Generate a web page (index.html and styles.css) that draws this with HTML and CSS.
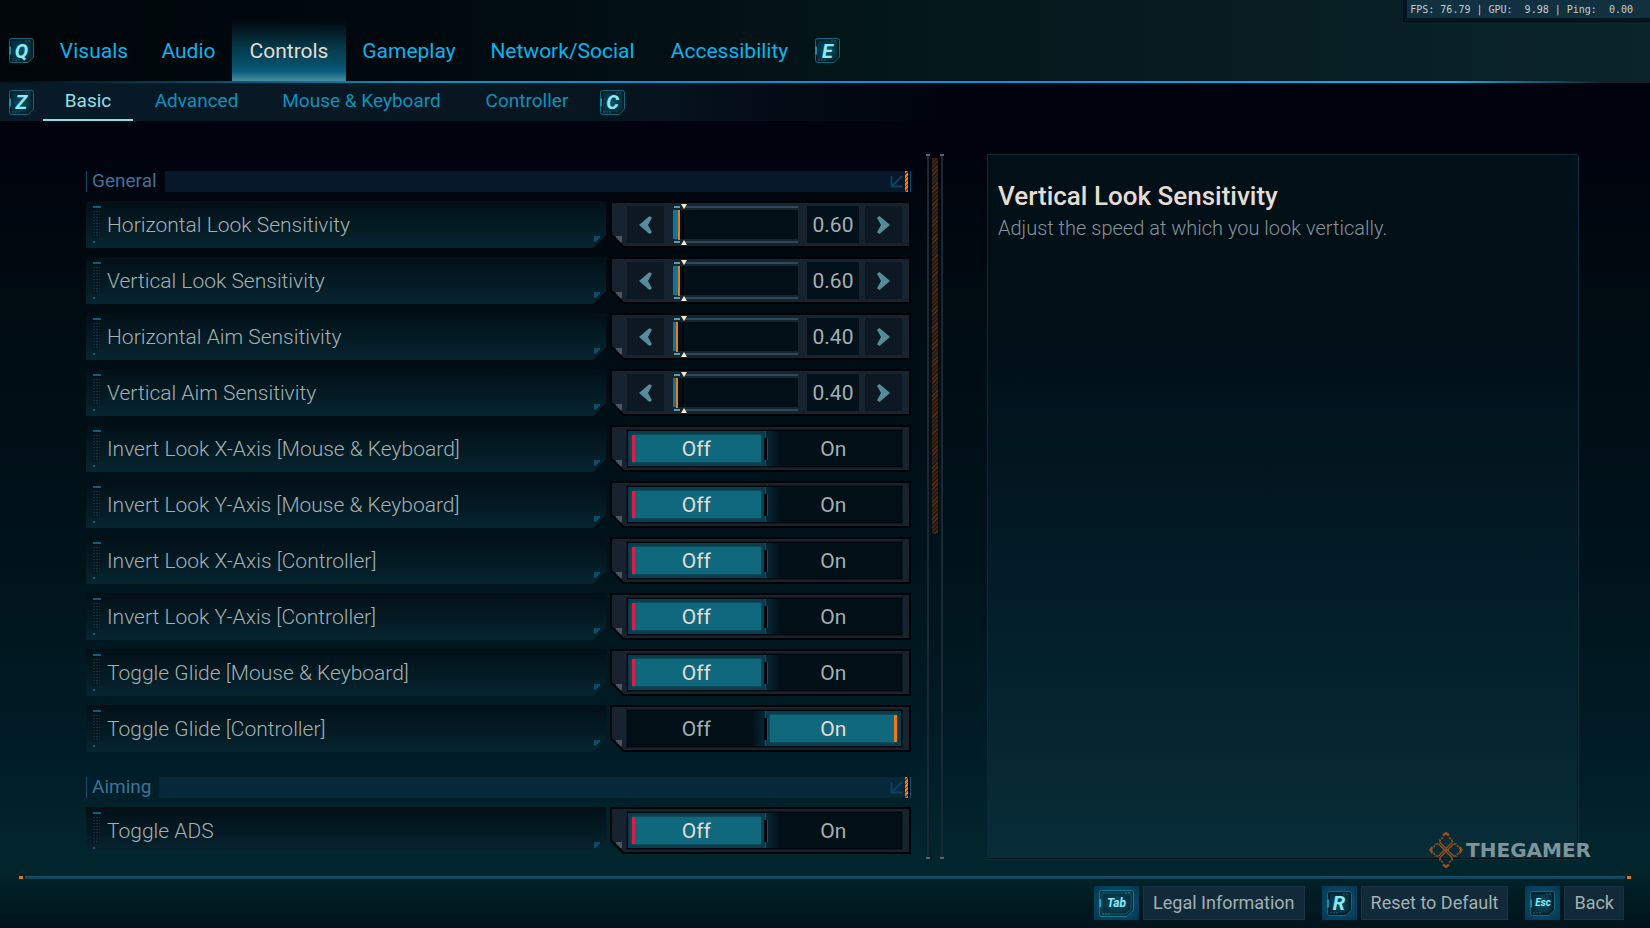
FILE: index.html
```html
<!DOCTYPE html>
<html lang="en">
<head>
<meta charset="utf-8">
<title>Controls</title>
<link rel="stylesheet" href="styles.css">
</head>
<body>
<svg class="defs" aria-hidden="true">
  <defs>
    <radialGradient id="glow"><stop offset="0" stop-color="#0f5468"/><stop offset="1" stop-color="#06303f"/></radialGradient>
    <symbol id="key" viewBox="0 0 25 25">
      <path d="M2.5.5h20a2 2 0 0 1 2 2v16.500l-5.500 5.500H2.500a2 2 0 0 1-2-2v-20a2 2 0 0 1 2-2z" fill="#04202b" stroke="#12677b"/>
      <path d="M3 3h19v15l-4 4H3z" fill="url(#glow)"/>
      <path d="M1 8.500v8" stroke="#1590a8" stroke-width="2"/>
      <path d="M16 3h5M3 22h8" stroke="#12677b" stroke-dasharray="2 1"/>
    </symbol>
    <symbol id="key-wide" viewBox="0 0 35 27">
      <path d="M2.500.5h30a2 2 0 0 1 2 2v17.500l-6.500 6.500H2.500a2 2 0 0 1-2-2v-22a2 2 0 0 1 2-2z" fill="#04303f" stroke="#14788a"/>
      <path d="M3 3h29v16l-5 5H3z" fill="url(#glow)" stroke="#0e5a6c"/>
      <path d="M1 9v8" stroke="#1aa5b8" stroke-width="2"/>
      <path d="M26 3h5M3 24h8" stroke="#14788a" stroke-dasharray="2 1"/>
    </symbol>
    <symbol id="prev" viewBox="0 0 13 18"><path d="M10.500 0 13 1.800 9 9l4 7.200L10.500 18 0 9z" fill="#568b99"/></symbol>
    <symbol id="next" viewBox="0 0 13 18"><path d="M2.500 0 0 1.800 4 9 0 16.200 2.500 18 13 9z" fill="#568b99"/></symbol>
    <symbol id="collapse" viewBox="0 0 13 13"><path d="M1.500 1v10.500H12M2 11 12 1" fill="none" stroke="#0d4361" stroke-width="1.800"/></symbol>
  </defs>
</svg>

<div class="stats">FPS: 76.79 | GPU:  9.98 | Ping:  0.00</div>

<header class="top">
  <button class="key"><svg><use href="#key"/></svg><span>Q</span></button>
  <nav class="tabs">
    <a href="#visuals">Visuals</a>
    <a href="#audio">Audio</a>
    <a href="#controls" class="active" aria-current="page">Controls</a>
    <a href="#gameplay">Gameplay</a>
    <a href="#network">Network/Social</a>
    <a href="#accessibility">Accessibility</a>
  </nav>
  <button class="key"><svg><use href="#key"/></svg><span>E</span></button>
</header>

<div class="sub">
  <button class="key"><svg><use href="#key"/></svg><span>Z</span></button>
  <nav class="subtabs">
    <a href="#basic" class="active" aria-current="page">Basic</a>
    <a href="#advanced">Advanced</a>
    <a href="#mouse">Mouse &amp; Keyboard</a>
    <a href="#controller">Controller</a>
  </nav>
  <button class="key"><svg><use href="#key"/></svg><span>C</span></button>
</div>

<main class="main">
  <div class="list">
    <section>
      <h2 class="group"><span class="group-name">General</span><span class="group-bar"><svg class="collapse"><use href="#collapse"/></svg></span></h2>
      <div class="rows" id="general"></div>
    </section>
    <section>
      <h2 class="group"><span class="group-name">Aiming</span><span class="group-bar"><svg class="collapse"><use href="#collapse"/></svg></span></h2>
      <div class="rows" id="aiming"></div>
    </section>
  </div>
  <div class="scroll"><div class="thumb"></div></div>
  <aside class="info">
    <h1>Vertical Look Sensitivity</h1>
    <p>Adjust the speed at which you look vertically.</p>
    <div class="brand">
      <svg viewBox="0 0 34 36" fill="none" stroke="#9a4f1d" stroke-width="1.200">
        <path d="M11 10.500 24.500 24M9.500 12 23 25.500M23 10.500 9.500 24M24.500 12 11 25.500"/>
        <path d="M11 10.500V8l3-2.500M23 10.500V8l-3-2.500M11 25.500V28l3 2.500M23 25.500V28l-3 2.500M9.500 12H7l-2.500 3M9.500 24H7l-2.500-3M24.500 12H27l2.500 3M24.500 24H27l2.500-3" stroke-width="1.600" stroke-dasharray="3 1"/>
        <path d="M14 3.500 17 1l3 2.500M14 32.500l3 2.500 3-2.500M3.500 15l-2 3 2 3M30.500 15l2 3-2 3" stroke-width="2.400"/>
      </svg>
      <span>THEGAMER</span>
    </div>
  </aside>
</main>

<footer class="footer">
  <div class="rule"></div>
  <div class="actions">
    <div class="action"><span class="cap"><svg class="wide"><use href="#key-wide"/></svg><kbd class="small">Tab</kbd></span><button>Legal Information</button></div>
    <div class="action"><span class="cap"><svg><use href="#key"/></svg><kbd>R</kbd></span><button>Reset to Default</button></div>
    <div class="action"><span class="cap"><svg><use href="#key"/></svg><kbd class="tiny">Esc</kbd></span><button>Back</button></div>
  </div>
</footer>
<script src="settings.js"></script>
</body>
</html>
```
FILE: settings.js
```js
const general = [
  { name: 'Horizontal Look Sensitivity', value: '0.60' },
  { name: 'Vertical Look Sensitivity', value: '0.60' },
  { name: 'Horizontal Aim Sensitivity', value: '0.40' },
  { name: 'Vertical Aim Sensitivity', value: '0.40' },
  { name: 'Invert Look X-Axis [Mouse & Keyboard]', on: false },
  { name: 'Invert Look Y-Axis [Mouse & Keyboard]', on: false },
  { name: 'Invert Look X-Axis [Controller]', on: false },
  { name: 'Invert Look Y-Axis [Controller]', on: false },
  { name: 'Toggle Glide [Mouse & Keyboard]', on: false },
  { name: 'Toggle Glide [Controller]', on: true }
];
const aiming = [{ name: 'Toggle ADS', on: false }];
const MIN = 0.2, MAX = 10;

function slider(item, id) {
  const fill = (item.value - MIN) / (MAX - MIN) * 100;
  return `<button class="step" aria-label="Decrease"><svg><use href="#prev"/></svg></button>
    <div class="slider" style="--fill:${fill}%">
      <input type="range" id="${id}" min="${MIN}" max="${MAX}" step="0.05" value="${item.value}">
    </div>
    <output class="value" for="${id}">${item.value}</output>
    <button class="step" aria-label="Increase"><svg><use href="#next"/></svg></button>`;
}

function toggle(item, id) {
  return `<div class="toggle" role="radiogroup" aria-labelledby="${id}-label">
      <label class="opt off"><input type="radio" name="${id}" ${item.on ? '' : 'checked'}><span>Off</span></label>
      <label class="opt on"><input type="radio" name="${id}" ${item.on ? 'checked' : ''}><span>On</span></label>
    </div>`;
}

function render(target, items) {
  document.getElementById(target).innerHTML = items.map((item, i) => {
    const id = `${target}-${i}`;
    const name = item.name.replace('&', '&amp;');
    const ranged = item.value !== undefined;
    const label = ranged ? `<label for="${id}">${name}</label>` : `<span id="${id}-label">${name}</span>`;
    return `<div class="row"><div class="name">${label}</div>
      <div class="control">${ranged ? slider(item, id) : toggle(item, id)}</div></div>`;
  }).join('');
}

render('general', general);
render('aiming', aiming);
```
FILE: styles.css
```css
* { box-sizing: border-box; }

body {
  margin: 0;
  min-height: 100vh;
  display: flex;
  flex-direction: column;
  background: linear-gradient(#00030d 0, #00030d 17%, #000b12 32%, #00121a 58%, #001d27 82%, #02262d 93%, #00131b 100%);
  color: #a3b0b2;
  font: 300 21px/24px Roboto, "Liberation Sans", sans-serif;
}

a { color: inherit; text-decoration: none; }
button { margin: 0; padding: 0; border: 0; background: none; color: inherit; font: inherit; }
h1, h2, p { margin: 0; }
.defs { position: absolute; width: 0; height: 0; }

.stats {
  position: absolute;
  top: 0;
  right: 0;
  height: 21px;
  padding: 0 17px 0 3px;
  border: solid #061620;
  border-width: 0 0 3px 3px;
  outline: 1px solid #02090f;
  background: #123140;
  color: #c3cdd0;
  font: 10px/19px "DejaVu Sans Mono", monospace;
  white-space: pre;
}

.top {
  display: flex;
  align-items: center;
  height: 83px;
  padding: 20px 9px 0;
  border-bottom: 2px solid;
  border-image: linear-gradient(90deg, #00131c 2%, #0a91c4 25%, #0a91e8 60%, #08b4e8 88%, #0a242a 97%) 1;
  background: linear-gradient(90deg, #00060a, #00090e 25%, #04171b 55%, #0a242a);
}
.tabs {
  display: grid;
  grid-template-columns: 102px 87px 114px 126px 181px 153px;
  align-self: stretch;
  margin: 0 9px;
  color: #08b4ee;
  font-weight: 400;
}
.tabs a { display: grid; place-content: center; white-space: nowrap; }
.tabs .active {
  background: linear-gradient(rgba(8, 80, 104, 0), #053848 45%, #07506a 75%, #0a6080 85%, #4d8d9c);
  color: #e6dcd4;
}

.key {
  display: grid;
  place-items: center;
  width: 25px;
  height: 25px;
}
.key > *, .cap > * { grid-area: 1 / 1; }
.key svg, .cap svg { width: 25px; height: 25px; }
.cap .wide { width: 35px; height: 27px; }
.key span, kbd { color: #8ceaf7; font: italic 700 20px/24px Roboto, sans-serif; }
kbd.small { font-size: 12px; }
kbd.tiny { font-size: 10px; }

.sub {
  display: flex;
  align-items: center;
  height: 38px;
  padding: 0 9px;
  background: linear-gradient(90deg, #081a28, #07151f 37%, rgba(4, 12, 22, 0) 57%);
}
.subtabs {
  display: grid;
  grid-template-columns: 90px 127px 203px 128px;
  align-self: stretch;
  margin: 0 9px;
  color: #0793bd;
  font-weight: 400;
  font-size: 19px;
}
.subtabs a { display: grid; place-content: center; border-bottom: 2px solid transparent; white-space: nowrap; }
.subtabs .active { border-color: #7fe3ee; color: #8fe0ea; }

.main {
  flex: 1;
  display: grid;
  grid-template-columns: minmax(0, 825fr) 76px minmax(0, 591fr);
  padding: 33px 72px 0 86px;
}
.list { padding-top: 17px; }
.list section + section { margin-top: 25px; }

.group { display: flex; height: 21px; margin-bottom: 9px; border-left: 1px solid #0d4d6e; color: #3f7299; font-weight: 400; font-size: 19px; line-height: 20px; }
.group-name { padding: 0 8px 0 5px; }
.group-bar {
  flex: 1;
  display: flex;
  justify-content: flex-end;
  align-items: center;
  border-right: 1px solid #0f4f76;
  background:
    linear-gradient(#00050e, #00050e) right / 2px 100% no-repeat,
    repeating-linear-gradient(135deg, #f07a10 0 2px, #803c0c 2px 3px) right 2px top / 3px 100% no-repeat,
    rgba(14, 54, 84, .4);
}
.collapse { width: 13px; height: 13px; margin-right: 7px; }

.rows { display: grid; gap: 9px; }
.row { display: grid; grid-template-columns: minmax(0, 1fr) 301px; gap: 4px; height: 47px; }
.name {
  display: flex;
  align-items: center;
  padding-left: 21px;
  background:
    linear-gradient(#096078, #096078) 7px 5px / 8px 2px no-repeat,
    linear-gradient(#096078, #096078) 7px 40px / 2px 2px no-repeat,
    repeating-linear-gradient(90deg, #02131b 0 1px, transparent 1px 3px) 6px 10px / 9px 27px no-repeat,
    repeating-linear-gradient(#0b3340 0 1px, transparent 1px 3px) 7px 10px / 7px 27px no-repeat,
    linear-gradient(135deg, #0a4b68 0 5px, transparent 5px) right 6px bottom 6px / 6px 6px no-repeat,
    linear-gradient(#020f17, #041b24 55%, #06252f);
  clip-path: polygon(0 0, 100% 0, 100% calc(100% - 13px), calc(100% - 13px) 100%, 0 100%);
  white-space: nowrap;
}
.control {
  position: relative;
  display: flex;
  align-items: center;
  padding: 0 9px 0 17px;
  background: #000306;
  clip-path: polygon(0 0, 100% 0, 100% 100%, 13px 100%, 0 calc(100% - 13px));
}
.control::before {
  content: "";
  position: absolute;
  inset: 2px;
  background:
    linear-gradient(225deg, #4a565f 0 5px, transparent 5px) 4px 33px / 6px 6px no-repeat,
    #17232e;
  clip-path: polygon(0 0, 100% 0, 100% 100%, 12px 100%, 0 calc(100% - 12px));
}
.control > * { position: relative; }

.step { display: grid; place-items: center; width: 37px; height: 37px; background: #0d1823; }
.step svg { width: 13px; height: 18px; }
.slider { width: 125px; height: 39px; margin: 0 9px; padding-top: 5px;
  background:
    linear-gradient(#4da0ae, #4da0ae) 1px 1px / 6px 2px no-repeat,
    linear-gradient(#4da0ae, #4da0ae) 1px 36px / 6px 2px no-repeat,
    linear-gradient(#2c4b58, #2c4b58) 12px 1px / 113px 2px no-repeat,
    linear-gradient(#2c4b58, #2c4b58) 12px 36px / 113px 2px no-repeat;
}
.slider::before, .slider::after {
  content: "";
  position: absolute;
  left: 8px;
  border: 3px solid transparent;
}
.slider::before { top: -1px; border-top: 5px solid #f4ead0; }
.slider::after { bottom: -1px; border-bottom: 5px solid #f4ead0; }
.slider input {
  display: block;
  width: 100%;
  height: 29px;
  margin: 0;
  appearance: none;
  background:
    linear-gradient(#000508, #000508) 9px 0 / 2px 100% no-repeat,
    linear-gradient(90deg, #0a7896 var(--fill), #010f17 var(--fill));
}
.slider input::-webkit-slider-thumb { appearance: none; width: 2px; height: 30px; background: #f07a10; }
.value { display: grid; place-content: center; width: 52px; height: 37px; background: #03111a; font-weight: 400; }
.value + .step { margin-left: 6px; }

.toggle { flex: 1; display: grid; grid-template-columns: 1fr 1fr; height: 37px; border: 1px solid #00060b; outline: 1px solid #0c1821; background: #010f17; }
.opt { position: relative; display: grid; place-items: center; padding: 4px; font-weight: 400; }
.opt + .opt { border-left: 1px solid #0b5666; }
.opt input { position: absolute; inset: 0; margin: 0; opacity: 0; }
.opt span { display: grid; place-content: center; width: 100%; height: 100%; }
.opt:has(:checked) { background: #0a3b4a; color: #e6dcd4; }
.opt :checked + span { background: #0f687c; box-shadow: 0 0 3px #0f687c; }
.off :checked + span { border-left: 3px solid #d81f4c; padding-right: 3px; }
.on :checked + span { border-right: 3px solid #f07a10; padding-left: 3px; }
.off:has(:checked) + .on { background: linear-gradient(90deg, #062837, transparent 14px); }
.off:not(:has(:checked)) { background: linear-gradient(270deg, #062837, transparent 14px); }
.opt + .opt::before { content: ""; position: absolute; left: -2px; top: 7px; width: 3px; height: 22px; border-right: 1px solid #0b5666; background: #00060b; }

.scroll {
  position: relative;
  width: 16px;
  margin-left: 16px;
  padding: 4px 3px;
  border: solid #1b2831;
  border-width: 0 2px;
}
.scroll::before, .scroll::after { content: ""; position: absolute; left: -3px; right: -3px; height: 2px; background: linear-gradient(90deg, #56636b 4px, transparent 4px calc(100% - 4px), #56636b calc(100% - 4px)); }
.scroll::before { top: 0; }
.scroll::after { bottom: 0; }
.thumb { width: 6px; height: 54%; border-radius: 0 0 2px 2px; background: repeating-linear-gradient(135deg, #4a2c17 0 1px, #2a1a12 1px 3px); }

.info {
  position: relative;
  padding: 27px 10px;
  border: 1px solid #0b2a38;
  border-right-color: #01121b;
  border-bottom-color: #01121b;
  box-shadow: 1px 1px #0b2f3c;
  background: linear-gradient(#010f17, #010f17 25%, #03202b 70%, #082d38);
}
.info h1 { color: #e6dcd4; font-size: 26px; font-weight: 500; line-height: 28px; }
.info p { padding-top: 6px; color: #84949a; font-size: 20px; }
.brand { position: absolute; right: -14px; bottom: -10px; display: flex; align-items: center; gap: 3px; color: #7f939b; font: 700 20px/24px "DejaVu Sans", sans-serif; }
.brand svg { width: 34px; height: 36px; }

.footer { padding: 17px 19px 8px; }
.rule { height: 3px; border: solid #e0770f; border-width: 0 4px; background: linear-gradient(#1c5873, #0c3c50) content-box; padding: 0 2px; }
.actions { display: flex; justify-content: flex-end; gap: 17px; padding: 7px 7px 0 0; }
.action { display: flex; gap: 4px; }
.cap { display: grid; place-items: center; height: 34px; padding: 0 5px; background: radial-gradient(#0a5878, #043652); }
.action button { height: 34px; padding: 0 9px; border: 1px solid #1a3446; background: #112a3a; font-weight: 400; font-size: 18px; white-space: nowrap; }
```
